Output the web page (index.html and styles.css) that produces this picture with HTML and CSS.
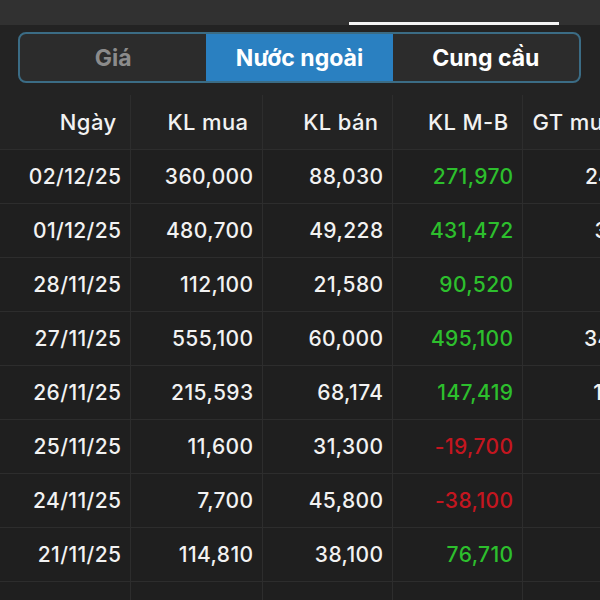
FILE: index.html
```html
<!DOCTYPE html>
<html lang="vi">
<head>
    <meta charset="UTF-8">
    <meta name="viewport" content="width=device-width, initial-scale=1.0">
    <title>Nước ngoài</title>
    <link rel="stylesheet" href="styles.css">
</head>
<body>
    <div class="topbar">
        <span class="tab-line"></span>
    </div>
    <div class="segbar">
        <div class="segment">
            <div class="seg-item muted">Giá</div>
            <div class="seg-item active">Nước ngoài</div>
            <div class="seg-item">Cung cầu</div>
        </div>
    </div>
    <div class="table-wrap">
        <table class="grid">
            <colgroup>
                <col class="w-date">
                <col class="w-buy">
                <col class="w-num">
                <col class="w-num">
                <col class="w-gt">
            </colgroup>
            <tr class="head">
                <th>Ngày</th>
                <th>KL mua</th>
                <th>KL bán</th>
                <th>KL M-B</th>
                <th class="left">GT mua</th>
            </tr>
            <tr>
                <td>02/12/25</td><td>360,000</td><td>88,030</td><td class="up">271,970</td><td>24,588</td>
            </tr>
            <tr>
                <td>01/12/25</td><td>480,700</td><td>49,228</td><td class="up">431,472</td><td>30,711</td>
            </tr>
            <tr>
                <td>28/11/25</td><td>112,100</td><td>21,580</td><td class="up">90,520</td><td>764</td>
            </tr>
            <tr>
                <td>27/11/25</td><td>555,100</td><td>60,000</td><td class="up">495,100</td><td>34,806</td>
            </tr>
            <tr>
                <td>26/11/25</td><td>215,593</td><td>68,174</td><td class="up">147,419</td><td>12,913</td>
            </tr>
            <tr>
                <td>25/11/25</td><td>11,600</td><td>31,300</td><td class="down">-19,700</td><td>730</td>
            </tr>
            <tr>
                <td>24/11/25</td><td>7,700</td><td>45,800</td><td class="down">-38,100</td><td>480</td>
            </tr>
            <tr>
                <td>21/11/25</td><td>114,810</td><td>38,100</td><td class="up">76,710</td><td>780</td>
            </tr>
            <tr>
                <td>20/11/25</td><td>98,400</td><td>52,300</td><td class="up">46,100</td><td>615</td>
            </tr>
        </table>
    </div>
</body>
</html>
```

FILE: styles.css
```css
body{
    margin: 0;
    background-color: #1f1f1f;
    font-family: Inter, "Liberation Sans", sans-serif;
    color: #f2f2f2;
    width: 600px;
    height: 600px;
    overflow: hidden;
}

.topbar{
    height: 25px;
    background-color: #313131;
    position: relative;
}
.tab-line{
    position: absolute;
    left: 349px;
    bottom: 0;
    width: 210px;
    height: 3px;
    background-color: #f4f4f4;
}

.segbar{
    background-color: #232323;
    padding: 7px 19px 12px 18px;
}
.segment{
    display: flex;
    height: 51px;
    box-sizing: border-box;
    border: 2px solid #3b6c85;
    border-radius: 8px;
    overflow: hidden;
    background-color: #2c2c2c;
}
.seg-item{
    flex: 1;
    display: flex;
    align-items: center;
    justify-content: center;
    font-size: 23px;
    font-weight: 700;
    color: #ffffff;
}
.seg-item.muted{
    color: #8b8b8b;
}
.seg-item.active{
    background-color: #2a80c1;
}

.table-wrap{
    width: 667px;
}
.grid{
    width: 667px;
    border-collapse: collapse;
    table-layout: fixed;
}
.w-date{ width: 130px; }
.w-buy{ width: 132px; }
.w-num{ width: 130px; }
.w-gt{ width: 145px; }

.grid th, .grid td{
    height: 53px;
    border: 1px solid #2d2d2d;
    text-align: right;
    font-size: 21px;
    font-weight: 500;
    letter-spacing: 0.4px;
    background-color: #1f1f1f;
    white-space: nowrap;
    overflow: hidden;
}
.grid td{
    padding: 0 8px 0 0;
}
.grid th{
    padding: 0 13px 0 0;
    font-size: 22px;
    height: 54px;
    background-color: #232323;
}
.grid th.left{
    text-align: left;
    padding: 0 0 0 10px;
}
.grid tr > :first-child{
    border-left: none;
}
.grid .head th{
    border-top: none;
}

.up{ color: #2dbf2d; }
.down{ color: #c4161f; }
```
